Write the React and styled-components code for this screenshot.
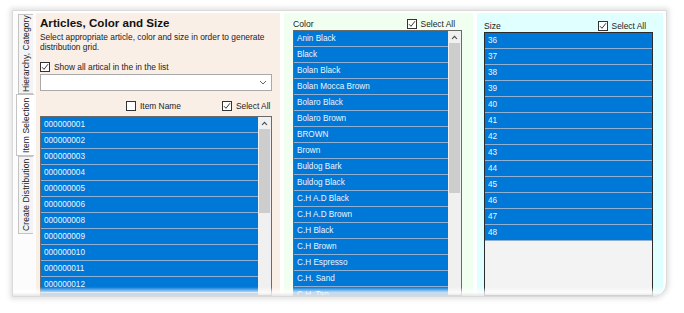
import React from 'react';
import styled, { createGlobalStyle } from 'styled-components';

const GlobalStyle = createGlobalStyle`
    html, body {
        margin: 0;
        padding: 0;
        background: #fff;
    }
    body {
        font-family: "Liberation Sans", Arial, sans-serif;
        color: #1a1a1a;
    }
`

const Stage = styled.div`
    width: 684px;
    height: 313px;
    padding: 10px 0 0 12px;
    box-sizing: border-box;
    overflow: hidden;
`

const Window = styled.div`
    position: relative;
    width: 655px;
    height: 287px;
    box-sizing: border-box;
    display: flex;
    padding-top: 2px;
    background: #fff;
    border: 1px solid #dadada;
    border-radius: 0 0 14px 0;
    box-shadow: 0 0 5px 2px rgba(0, 0, 0, 0.12);
    overflow: hidden;
`

const TabStrip = styled.div`
    width: 23px;
    flex: none;
    display: flex;
    flex-direction: column;
    padding: 1px 0 0 3px;
    box-sizing: border-box;
    background: #fcfcfc;
`

const Tab = styled.div`
    writing-mode: vertical-rl;
    transform: rotate(180deg);
    height: ${props => props.h}px;
    width: ${props => props.active ? 18 : 15}px;
    margin-left: ${props => props.active ? 0 : 2}px;
    box-sizing: border-box;
    border: 1px solid #c4c4c4;
    border-left: none;
    background: ${props => props.active ? '#fff' : '#f4f4f4'};
    font-size: 8.5px;
    color: #222;
    display: flex;
    align-items: center;
    justify-content: center;
    white-space: nowrap;
    letter-spacing: 0.1px;
`

const Panel = styled.div`
    width: ${props => props.w}px;
    flex: none;
    box-sizing: border-box;
    background: ${props => props.bg};
    padding: ${props => props.pad};
    margin-right: ${props => props.gap || 0}px;
    display: flex;
    flex-direction: column;
    overflow: hidden;
`

const Title = styled.div`
    font-weight: bold;
    font-size: 11.6px;
    line-height: 14px;
    color: #111;
`

const Desc = styled.div`
    font-size: 8.4px;
    line-height: 9.5px;
    margin-top: 3px;
    color: #222;
`

const CheckRow = styled.div`
    display: flex;
    align-items: center;
    height: 10px;
    margin-top: ${props => props.mt || 0}px;
    justify-content: ${props => props.justify || 'flex-start'};
`

const CheckLabel = styled.label`
    display: flex;
    align-items: center;
    gap: 4px;
    font-size: 8.4px;
    color: #222;
    margin-left: ${props => props.ml || 0}px;
    white-space: nowrap;
`

const Box = styled.span`
    width: 10px;
    height: 10px;
    box-sizing: border-box;
    border: 1px solid #333;
    background: #fff;
    display: inline-flex;
    align-items: center;
    justify-content: center;
    flex: none;
`

const Combo = styled.div`
    height: 17px;
    margin: 2px 8px 0 0;
    box-sizing: border-box;
    border: 1px solid #a9a9a9;
    background: #fff;
    display: flex;
    align-items: center;
    justify-content: flex-end;
    padding-right: 4px;
`

const ListHeader = styled.div`
    display: flex;
    align-items: center;
    justify-content: space-between;
    height: 11px;
    font-size: 8.6px;
    color: #222;
    padding-right: ${props => props.pr || 0}px;
`

const ListBox = styled.div`
    margin-top: ${props => props.mt || 0}px;
    margin-right: ${props => props.mr || 0}px;
    flex: 1;
    min-height: 0;
    box-sizing: border-box;
    border: 1px solid ${props => props.dark ? '#2b2b2b' : '#6a6a6a'};
    background: #f3f3f3;
    display: flex;
    overflow: hidden;
`

const Rows = styled.div`
    flex: 1;
    display: flex;
    flex-direction: column;
`

const Row = styled.div`
    height: 16px;
    flex: none;
    box-sizing: border-box;
    background: #0078d7;
    border-bottom: 1px solid #8fb0d2;
    color: #eef4fb;
    font-size: 8.2px;
    line-height: 15px;
    padding-left: 3px;
    white-space: nowrap;
`

const ScrollBar = styled.div`
    width: 13px;
    flex: none;
    background: #f0f0f0;
    display: flex;
    flex-direction: column;
    align-items: center;
`

const ArrowBtn = styled.div`
    height: ${props => props.h}px;
    width: 100%;
    display: flex;
    align-items: center;
    justify-content: center;
    flex: none;
`

const Thumb = styled.div`
    width: 11px;
    height: ${props => props.h}px;
    background: #cdcdcd;
    flex: none;
`

const Fade = styled.div`
    position: absolute;
    left: 0;
    right: 0;
    bottom: 0;
    height: 9px;
    background: linear-gradient(rgba(255, 255, 255, 0), rgba(255, 255, 255, 0.75) 60%, rgba(228, 228, 228, 0.9));
    pointer-events: none;
`

function Check({ checked }) {
    return (
        <Box>
            {checked &&
                <svg width="8" height="8" viewBox="0 0 8 8">
                    <polyline points="1,4.2 3,6.3 7,1.2" fill="none" stroke="#222" strokeWidth="0.9" />
                </svg>}
        </Box>
    );
}

function UpArrow() {
    return (
        <svg width="7" height="5" viewBox="0 0 7 5">
            <polyline points="1,4 3.5,1.3 6,4" fill="none" stroke="#444" strokeWidth="1.1" />
        </svg>
    );
}

const articles = ['000000001', '000000002', '000000003', '000000004', '000000005', '000000006',
    '000000008', '000000009', '000000010', '000000011', '000000012', '000000013'];

const colors = ['Anin Black', 'Black', 'Bolan Black', 'Bolan Mocca Brown', 'Bolaro Black', 'Bolaro Brown',
    'BROWN', 'Brown', 'Buldog Bark', 'Buldog Black', 'C.H A.D Black', 'C.H A.D Brown', 'C.H Black',
    'C.H Brown', 'C.H Espresso', 'C.H. Sand', 'C.H. Tan'];

const sizes = ['36', '37', '38', '39', '40', '41', '42', '43', '44', '45', '46', '47', '48'];

export default function App() {
    return (
        <Stage>
            <GlobalStyle />
            <Window>
                <TabStrip>
                    <Tab h={80}>Hierarchy, Category</Tab>
                    <Tab h={62} active>Item Selection</Tab>
                    <Tab h={78}>Create Distribution</Tab>
                </TabStrip>

                <Panel w={244} bg="#faefe6" pad="3px 0 0 4px" gap={4}>
                    <Title>Articles, Color and Size</Title>
                    <Desc>Select appropriate article, color and size in order to generate distribution grid.</Desc>
                    <CheckRow mt={10}>
                        <CheckLabel><Check checked />Show all artical in the in the list</CheckLabel>
                    </CheckRow>
                    <Combo>
                        <svg width="8" height="5" viewBox="0 0 8 5">
                            <polyline points="1,1 4,4 7,1" fill="none" stroke="#666" strokeWidth="1" />
                        </svg>
                    </Combo>
                    <CheckRow mt={10}>
                        <CheckLabel ml={86}><Check />Item Name</CheckLabel>
                        <CheckLabel ml={41}><Check checked />Select All</CheckLabel>
                    </CheckRow>
                    <ListBox mt={5} mr={8}>
                        <Rows>
                            {articles.map(a => <Row key={a}>{a}</Row>)}
                        </Rows>
                        <ScrollBar>
                            <ArrowBtn h={12}><UpArrow /></ArrowBtn>
                            <Thumb h={84} />
                        </ScrollBar>
                    </ListBox>
                </Panel>

                <Panel w={189} bg="#f0fff0" pad="5px 0 0 9px" gap={4}>
                    <ListHeader pr={18}>
                        <span>Color</span>
                        <CheckLabel><Check checked />Select All</CheckLabel>
                    </ListHeader>
                    <ListBox mt={1} mr={11}>
                        <Rows>
                            {colors.map(c => <Row key={c}>{c}</Row>)}
                        </Rows>
                        <ScrollBar>
                            <ArrowBtn h={12}><UpArrow /></ArrowBtn>
                            <Thumb h={150} />
                        </ScrollBar>
                    </ListBox>
                </Panel>

                <Panel w={186} bg="#e0ffff" pad="7px 0 0 7px">
                    <ListHeader pr={17}>
                        <span>Size</span>
                        <CheckLabel><Check checked />Select All</CheckLabel>
                    </ListHeader>
                    <ListBox mt={1} mr={10} dark>
                        <Rows>
                            {sizes.map(s => <Row key={s}>{s}</Row>)}
                        </Rows>
                    </ListBox>
                </Panel>

                <Fade />
            </Window>
        </Stage>
    );
}
